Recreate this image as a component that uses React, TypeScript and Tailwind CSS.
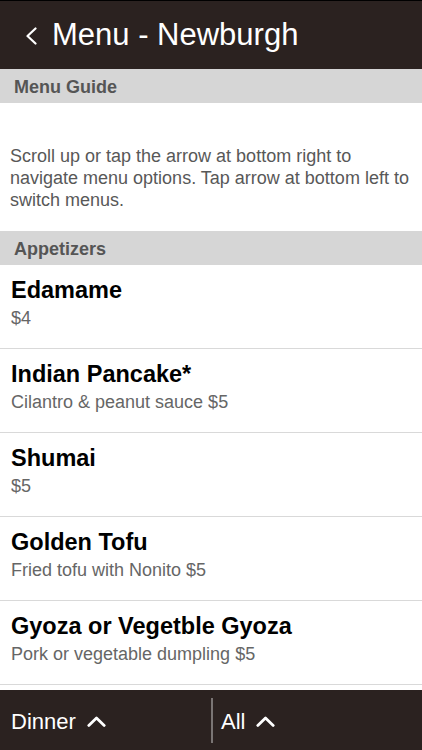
import React from 'react';

const items = [
  { name: 'Edamame', desc: '$4' },
  { name: 'Indian Pancake*', desc: 'Cilantro & peanut sauce $5' },
  { name: 'Shumai', desc: '$5' },
  { name: 'Golden Tofu', desc: 'Fried tofu with Nonito $5' },
  { name: 'Gyoza or Vegetble Gyoza', desc: 'Pork or vegetable dumpling $5' },
];

const ChevronUp = () => (
  <svg width="19" height="11" viewBox="0 0 19 11" fill="none" className="ml-[11px] shrink-0">
    <path d="M1.8 9.4 L9.5 2 L17.2 9.4" stroke="white" strokeWidth="2.8" strokeLinecap="round" strokeLinejoin="round" />
  </svg>
);

const SectionBar = ({ title }: { title: string }) => (
  <div className="h-[34px] shrink-0 bg-[#d6d6d6] px-[14px] pt-[2px] text-[18px] font-bold leading-[32px] text-[#555555]">
    {title}
  </div>
);

export default function App() {
  return (
    <div
      className="flex h-[750px] w-[422px] flex-col overflow-hidden bg-white"
      style={{ fontFamily: '"Liberation Sans", Arial, sans-serif' }}
    >
      {/* Header */}
      <div className="flex h-[69px] shrink-0 items-center border-t border-black bg-[#2b2220] pl-[25px]">
        <svg width="13" height="18" viewBox="0 0 13 18" fill="none" className="mt-[2px]">
          <path d="M10.5 1.5 L2.5 9 L10.5 16.5" stroke="white" strokeWidth="2.2" strokeLinecap="round" strokeLinejoin="round" />
        </svg>
        <span className="ml-[14px] text-[31px] leading-[36px] text-white">Menu - Newburgh</span>
      </div>

      {/* Content */}
      <div className="flex flex-1 flex-col overflow-hidden">
        <SectionBar title="Menu Guide" />
        <div className="shrink-0 px-[10px] pb-[20px] pt-[42px] text-[18px] leading-[22px] text-[#585858]">
          Scroll up or tap the arrow at bottom right to navigate menu options. Tap arrow at bottom left to switch menus.
        </div>
        <SectionBar title="Appetizers" />
        {items.map((item) => (
          <div key={item.name} className="shrink-0 border-b border-[#d9d9d9] px-[11px] pb-[19px] pt-[11px]">
            <div className="text-[23.5px] font-bold leading-[28px] text-black">{item.name}</div>
            <div className="mt-[3px] text-[18px] leading-[22px] text-[#666666]">{item.desc}</div>
          </div>
        ))}
      </div>

      {/* Footer */}
      <div className="flex h-[60px] shrink-0 items-center bg-[#2b2220]">
        <div className="flex h-[60px] w-[211px] items-center pl-[11px] pt-[3px]">
          <span className="text-[22px] leading-[30px] text-white">Dinner</span>
          <ChevronUp />
        </div>
        <div className="h-[45px] w-[2px] bg-[#7a7574]" />
        <div className="flex h-[60px] flex-1 items-center pl-[8px] pt-[3px]">
          <span className="text-[22px] leading-[30px] text-white">All</span>
          <ChevronUp />
        </div>
      </div>
    </div>
  );
}
